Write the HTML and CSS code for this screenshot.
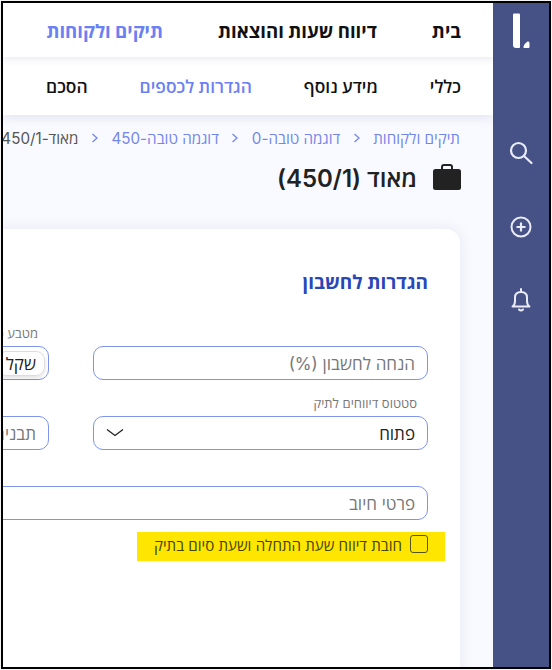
FILE: index.html
```html
<!DOCTYPE html>
<html lang="he" dir="rtl">
<head>
<meta charset="utf-8">
<title>מאוד (450/1)</title>
<link rel="stylesheet" href="styles.css">
</head>
<body>
<div class="frame">
  <aside class="sidebar">
    <svg class="logo" width="18" height="36" viewBox="0 0 18 36"><path d="M1 1.500Q1 .5 2 .5H7Q8 .5 8 1.500V34Q8 35 7 35H4Q1 35 1 32Z" fill="#fff"/><path d="M12.500 35Q11 35 11.500 33.500Q13 30 15.500 28.500Q17.500 28 17.500 30V34Q17.500 35 16.500 35Z" fill="#fff"/></svg>
    <div class="side-icons">
      <svg width="26" height="26" viewBox="0 0 26 26" fill="none" stroke="#e9ecf8" stroke-width="2.200" stroke-linecap="round"><circle cx="10.500" cy="10.500" r="7.500"/><path d="M16 16L23.500 23"/></svg>
      <svg width="24" height="24" viewBox="0 0 24 24" fill="none" stroke="#e9ecf8" stroke-width="2"><circle cx="12" cy="12" r="9.500"/><path d="M12 7.500V16.500M7.500 12H16.500" stroke-width="2.200"/></svg>
      <svg width="20" height="24" viewBox="0 0 20 24" fill="none" stroke="#e9ecf8" stroke-width="2" stroke-linejoin="round"><path d="M1.500 18.500Q4 17 4 13V9.500Q4 4 10 4Q16 4 16 9.500V13Q16 17 18.500 18.500Z"/><path d="M10 1V3.500M8 21.500Q10 23.500 12 21.500" stroke-linecap="round"/></svg>
    </div>
  </aside>
  <main class="main">
    <nav class="topnav">
      <a class="tn">בית</a>
      <a class="tn">דיווח שעות והוצאות</a>
      <a class="tn active">תיקים ולקוחות</a>
    </nav>
    <nav class="subnav">
      <a class="sn">כללי</a>
      <a class="sn">מידע נוסף</a>
      <a class="sn active">הגדרות לכספים</a>
      <a class="sn">הסכם</a>
    </nav>
    <div class="content">
      <div class="crumbs">
        <a>תיקים ולקוחות</a>
        <svg class="sep" width="8" height="10" viewBox="0 0 8 10" fill="none" stroke="#7487e8" stroke-width="1.300"><path d="M1.500 1L6 5L1.500 9"/></svg>
        <a>דוגמה טובה-0</a>
        <svg class="sep" width="8" height="10" viewBox="0 0 8 10" fill="none" stroke="#7487e8" stroke-width="1.300"><path d="M1.500 1L6 5L1.500 9"/></svg>
        <a>דוגמה טובה-450</a>
        <svg class="sep" width="8" height="10" viewBox="0 0 8 10" fill="none" stroke="#7487e8" stroke-width="1.300"><path d="M1.500 1L6 5L1.500 9"/></svg>
        <span class="current">מאוד-450/1</span>
      </div>
      <div class="title-row">
        <svg width="28" height="26" viewBox="0 0 28 26"><path d="M9 6V3Q9 1 11 1H17Q19 1 19 3V6" fill="none" stroke="#222" stroke-width="2"/><rect y="5" width="28" height="21" rx="2.500" fill="#222"/></svg>
        <h1>מאוד (450/1)</h1>
      </div>
      <section class="card">
        <h2>הגדרות לחשבון</h2>
        <div class="grid">
          <div class="field nolabel">
            <div class="box placeholder">הנחה לחשבון (%)</div>
          </div>
          <div class="field">
            <label>מטבע פעילות</label>
            <div class="box"><span class="chip">שקל</span></div>
          </div>
          <div class="field">
            <label>סטטוס דיווחים לתיק</label>
            <div class="box select">
              <span>פתוח</span>
              <svg width="18" height="10" viewBox="0 0 18 10" fill="none" stroke="#222" stroke-width="1.300"><path d="M1 1.500L9 7.500L17 1.500"/></svg>
            </div>
          </div>
          <div class="field nolabel">
            <div class="box placeholder">תבנית</div>
          </div>
          <div class="field nolabel wide">
            <div class="box placeholder">פרטי חיוב</div>
          </div>
        </div>
        <div class="highlight">
          <span class="check"></span>
          <span>חובת דיווח שעת התחלה ושעת סיום בתיק</span>
        </div>
      </section>
    </div>
  </main>
</div>
</body>
</html>
```

FILE: styles.css
```css
* { box-sizing: border-box; }
html, body { margin: 0; height: 100%; background: #f4f4f6; }
body { font-family: Inter, "Open Sans", "Noto Sans", "Liberation Sans", sans-serif; overflow: hidden; }
.frame {
  margin: 1px;
  width: 550px;
  height: 668px;
  border: 2px solid #000;
  display: flex;
  overflow: hidden;
  background: #f9faff;
}
.sidebar {
  width: 56px;
  flex: none;
  background: #465186;
  display: flex;
  flex-direction: column;
  align-items: center;
  padding-top: 10px;
}
.logo { display: block; }
.side-icons {
  margin-top: 91px;
  display: flex;
  flex-direction: column;
  align-items: center;
  gap: 49px;
}
.main { flex: 1; min-width: 0; overflow: hidden; display: flex; flex-direction: column; }
.topnav, .subnav { flex: none; display: flex; background: #fff; padding-right: 32px; white-space: nowrap; align-items: center; position: relative; }
.topnav { height: 54px; gap: 55px; font-size: 18.600px; font-weight: 700; color: #111; z-index: 2; box-shadow: 0 2px 7px rgba(70, 70, 130, .12); }
.subnav { height: 58px; gap: 52px; font-size: 17.400px; font-weight: 600; color: #111; z-index: 1; box-shadow: 0 2px 10px rgba(70, 70, 130, .14); }
.active { color: #6b80f2; }
.content { flex: 1; padding: 13px 33px 0 0; min-height: 0; }
.crumbs { display: flex; align-items: center; font-size: 15.200px; color: #7487e8; white-space: nowrap; height: 20px; }
.sep { flex: none; margin: 0 12.500px; }
.current { color: #555; }
.title-row { display: flex; align-items: center; gap: 16px; margin: 14px -1px 0 0; height: 30px; }
.title-row h1 { margin: 0; font-size: 24px; font-weight: 600; color: #222; white-space: nowrap; }
.card {
  margin-top: 37px;
  width: 820px;
  height: 460px;
  background: #fff;
  border-radius: 14px 14px 0 0;
  box-shadow: 0 0 14px rgba(70, 70, 130, .1);
  padding: 39px 32px 0 0;
}
.card h2 { margin: 0; font-size: 19px; font-weight: 700; color: #2a47b8; line-height: 30px; }
.grid { margin-top: 26px; display: grid; grid-template-columns: 335px 335px; column-gap: 44px; row-gap: 14px; align-items: end; }
.field label { display: block; font-size: 13px; color: #777; line-height: 18px; margin-bottom: 4px; padding-right: 11px; }
.nolabel { padding-top: 22px; }
.wide { grid-column: 1 / -1; }
.box {
  height: 34px;
  border: 1px solid #7f94ec;
  border-radius: 10px;
  background: #fff;
  padding: 0 12px;
  display: flex;
  align-items: center;
  font-size: 17px;
  color: #222;
}
.placeholder { color: #777; }
.select { justify-content: space-between; }
.chip { height: 25px; padding: 0 8px; margin-right: -9px; border: 1px solid #ddd; border-radius: 9px; box-shadow: 0 2px 4px rgba(0,0,0,.12); display: flex; align-items: center; }
.highlight {
  margin: 12px -17px 0 0;
  width: 308px;
  height: 29px;
  background: #ffe600;
  padding: 3px 17px 0 0;
  display: flex;
  align-items: flex-start;
  gap: 8px;
  font-size: 15.100px;
  color: #444400;
  white-space: nowrap;
}
.check { width: 18px; height: 18px; flex: none; border: 1px solid #55551a; border-radius: 3px; }
```
